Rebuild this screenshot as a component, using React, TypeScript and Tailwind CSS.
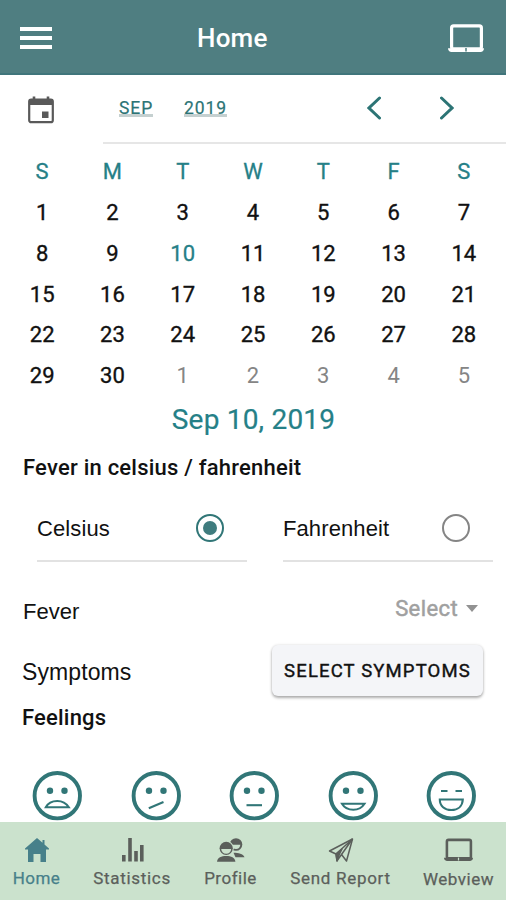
import React from "react";

const WEEKDAYS = ["S", "M", "T", "W", "T", "F", "S"];
const DAYS = [...Array.from({ length: 30 }, (_, i) => i + 1), 1, 2, 3, 4, 5];

function Laptop({ className, notch }: { className: string; notch: string }) {
  return (
    <svg viewBox="0 0 36 29" className={className} fill="none">
      <rect x="3.600" y="1.900" width="29.800" height="23" rx="2" stroke="currentColor" strokeWidth="3.200" />
      <path d="M0 24.200h36c0 2-1.500 3.800-3.500 3.800h-29C1.500 28 0 26.200 0 24.200z" fill="currentColor" />
      <path d="M18 24v3.500" stroke={notch} strokeWidth="1.500" />
    </svg>
  );
}

function CalendarIcon() {
  return (
    <svg viewBox="0 0 28 28" className="size-7 text-[#595959]" fill="none">
      <path d="M7 0.500v4M21 0.500v4" stroke="currentColor" strokeWidth="2.600" />
      <rect x="2.200" y="3.500" width="23.600" height="22.700" rx="2" stroke="currentColor" strokeWidth="2.200" />
      <path d="M2 3h24v6H2z" fill="currentColor" />
      <path d="M15 15.500h6.500v6.500H15z" fill="currentColor" />
    </svg>
  );
}

function Face({ children }: { children: React.ReactNode }) {
  return (
    <svg viewBox="0 0 50 50" className="size-[50px] text-[#317677]" fill="none" stroke="currentColor" strokeWidth="2.100">
      <circle cx="25.300" cy="24.700" r="22.700" strokeWidth="3.900" />
      {children}
    </svg>
  );
}

function Eyes() {
  return (
    <g fill="currentColor" stroke="none">
      <circle cx="18" cy="19.700" r="3.200" />
      <circle cx="32.500" cy="19.700" r="3.200" />
    </g>
  );
}

function Feelings() {
  return (
    <div className="flex justify-between pl-8 pr-[30px]">
      <Face>
        <Eyes />
        <path d="M13.800 36.300C16 32 20 30 25.300 30S34 32 36.800 36.300Z" />
      </Face>
      <Face>
        <Eyes />
        <path d="M17.800 37.300 32.500 31" />
      </Face>
      <Face>
        <Eyes />
        <path d="M17.500 34.200h15.500" />
      </Face>
      <Face>
        <Eyes />
        <path d="M14 32.700h22.500C34 36.700 30 38.700 25.300 38.700s-9-2-11.300-6Z" />
      </Face>
      <Face>
        <path d="M15 20h6.500M29.500 20H36" />
        <path d="M13.800 28.500h23C36.500 35 32 39 25.300 39S13.800 35 13.800 28.500Z" />
      </Face>
    </div>
  );
}

function RadioRow({ label, checked }: { label: string; checked?: boolean }) {
  return (
    <div className="flex h-[65px] w-[210px] items-center justify-between border-b-2 border-[#e2e2e2] pr-[23px]">
      <span className="font-['Liberation_Sans',sans-serif] text-[22px] tracking-[0.100px]">{label}</span>
      {checked ? (
        <span className="flex size-7 items-center justify-center rounded-full border-[2.500px] border-[#317677]">
          <span className="size-3.5 rounded-full bg-[#3f7c7e]" />
        </span>
      ) : (
        <span className="size-7 rounded-full border-2 border-[#858585]" />
      )}
    </div>
  );
}

function Tab({ label, className, children }: { label: string; className: string; children: React.ReactNode }) {
  return (
    <div className={`flex flex-col items-center ${className}`}>
      <div className="flex h-[28px] items-center">{children}</div>
      <span className="mt-1 whitespace-nowrap text-[17px] leading-5 [-webkit-text-stroke:0.250px]">{label}</span>
    </div>
  );
}

export default function App() {
  return (
    <div className="flex h-[900px] w-[506px] flex-col overflow-hidden bg-white font-[Roboto,sans-serif] text-[#111]">
      <header className="flex h-[75px] shrink-0 items-center border-b-2 border-[#40757b] bg-[#4f7e81] pl-5 pr-[22px] pt-0.5 text-white">
        <div className="flex w-[177px] flex-col gap-[5px]">
          <span className="h-1 w-8 bg-white" />
          <span className="h-1 w-8 bg-white" />
          <span className="h-1 w-8 bg-white" />
        </div>
        <h1 className="pt-0.5 text-[26px] font-medium tracking-[0.200px]">Home</h1>
        <Laptop className="ml-auto mt-0.5 h-[29px] w-9" notch="#4f7e81" />
      </header>

      <div className="flex h-[69px] shrink-0 pl-[27px]">
        <div className="flex w-[76px] items-center">
          <CalendarIcon />
        </div>
        <div className="flex flex-1 items-center border-b-2 border-[#e6e6e6] pl-4 text-[17.500px] tracking-[0.900px] text-[#2c7475]">
          <span className="w-[65px]">
            <span className="inline-block h-5 border-b-[3px] border-[#c5d0d0] leading-[22px] [-webkit-text-stroke:0.200px]">SEP</span>
          </span>
          <span className="w-[183px]">
            <span className="inline-block h-5 border-b-[3px] border-[#c5d0d0] leading-[22px] [-webkit-text-stroke:0.200px]">2019</span>
          </span>
          <svg viewBox="0 0 14 24" className="-mt-0.5 h-6 w-3.5" fill="none" stroke="currentColor" strokeWidth="3">
            <path d="M12.500 2 2 12l10.500 10" strokeLinecap="round" />
          </svg>
          <svg viewBox="0 0 14 24" className="-mt-0.5 ml-[59px] h-6 w-3.5" fill="none" stroke="currentColor" strokeWidth="3">
            <path d="m1.500 2 10.500 10L1.500 22" strokeLinecap="round" />
          </svg>
        </div>
      </div>

      <div className="mt-2 grid shrink-0 auto-rows-[40.750px] grid-cols-7 items-center px-[7px] text-center text-[22px] leading-none">
        {WEEKDAYS.map((d, i) => (
          <span key={i} className="text-[#258087] [-webkit-text-stroke:0.300px]">{d}</span>
        ))}
        {DAYS.map((d, i) => (
          <span
            key={i}
            className={
              i === 9
                ? "text-[#258087] [-webkit-text-stroke:0.300px]"
                : i > 29
                  ? "text-[#858585]"
                  : "text-[#111] [-webkit-text-stroke:0.350px]"
            }
          >
            {d}
          </span>
        ))}
      </div>

      <p className="mt-[3px] pl-px text-center text-[28px] leading-10 tracking-[0.200px] text-[#258087] [-webkit-text-stroke:0.200px]">Sep 10, 2019</p>
      <h2 className="mt-[14px] pl-[23px] text-[22px] font-medium leading-7 tracking-[0.220px]">Fever in celsius / fahrenheit</h2>

      <div className="mt-[15px] flex gap-9 pl-[37px]">
        <RadioRow label="Celsius" checked />
        <RadioRow label="Fahrenheit" />
      </div>

      <div className="mt-[31px] flex h-8 items-center justify-between pl-[23px] pr-[28px]">
        <span className="pt-1.5 font-['Liberation_Sans',sans-serif] text-[22px]">Fever</span>
        <span className="flex items-center gap-[8px] text-[22px] tracking-[0.400px] text-[#a0a0a0] [-webkit-text-stroke:0.500px]">
          Select
          <span className="border-x-[6.500px] border-t-[7px] border-x-transparent border-t-[#929292]" />
        </span>
      </div>

      <div className="mt-5 flex h-[51px] items-center justify-between pl-[22px] pr-[23px]">
        <span className="pt-1 font-['Liberation_Sans',sans-serif] text-[23px] tracking-[0.100px]">Symptoms</span>
        <button className="h-[51px] w-[211px] rounded-[6px] bg-[#f4f5f8] pt-1 text-[18.500px] tracking-[1.150px] [-webkit-text-stroke:0.400px] shadow-[0_2px_3px_rgba(0,0,0,0.3),0_0_3px_rgba(0,0,0,0.12)]">
          SELECT SYMPTOMS
        </button>
      </div>

      <h2 className="mb-[39px] mt-2 pl-[22px] text-[22px] font-medium leading-7 tracking-[0.200px]">Feelings</h2>
      <div className="-mb-1 h-[51px] shrink-0">
        <Feelings />
      </div>

      <nav className="relative mt-auto flex h-[78px] shrink-0 bg-[#cbe2cd] pt-[14px] text-[#5b5f5b]">
        <Tab label="Home" className="w-[73px] tracking-[0.400px] text-[#47808a]">
          <svg viewBox="0 0 24 24" className="size-6" fill="currentColor">
            <path d="M12 0 0 10.500V11.500h3V24h5.500v-8h7v8H21V11.500h3v-1L19.500 6.500V2h-2v2.800Z" />
          </svg>
        </Tab>
        <Tab label="Statistics" className="w-[118px] tracking-[0.700px]">
          <svg viewBox="0 0 22 24" className="ml-0.5 h-6 w-[22px]" fill="currentColor">
            <path d="M0 17h3.600v6.500H0zM6.200 0h3.600v23.500H6.200zM12.200 13h3.600v10.500h-3.600zM18 7h3.600v16.500H18z" />
          </svg>
        </Tab>
        <Tab label="Profile" className="w-[79px] tracking-[0.500px]">
          <svg viewBox="0 0 28 24" className="h-6 w-7" fill="currentColor">
            <circle cx="19" cy="6.500" r="6.300" />
            <path d="M14.500 6.800h8.800c-.300 2.700-1.800 4.300-4.300 4.300s-4.200-1.600-4.500-4.300Z" fill="#cbe2cd" />
            <path d="M16.500 14.700c5 0 9.500.800 11 4.600h-9Z" />
            <circle cx="9.200" cy="10.300" r="7.600" fill="#cbe2cd" />
            <circle cx="9.200" cy="10.300" r="6.600" />
            <path d="M4.200 11h10c-.300 3-2.200 4.700-5 4.700s-4.700-1.700-5-4.700Z" fill="#cbe2cd" />
            <path d="M0 23.700C.500 19.500 4.200 18 9.200 18s8.700 1.500 9.200 5.700Z" />
          </svg>
        </Tab>
        <Tab label="Send Report" className="w-[141px] tracking-[0.700px]">
          <svg viewBox="0 0 26 26" className="mt-px size-[26px]" fill="none" stroke="currentColor" strokeWidth="1.500" strokeLinejoin="round">
            <path d="M1.500 13 24.500 1 18.500 23l-5-6.500-4.500 6.300L8 16Z" />
            <path d="m24.500 1-11 15.500M24.500 1 8 16" />
            <path d="m8 16 6-5-2.500 5L9 23Z" fill="currentColor" />
          </svg>
        </Tab>
        <Tab label="Webview" className="w-[95px] pt-px tracking-[0.500px]">
          <Laptop className="mb-0.5 h-6 w-[29px]" notch="#cbe2cd" />
        </Tab>
      </nav>
    </div>
  );
}
